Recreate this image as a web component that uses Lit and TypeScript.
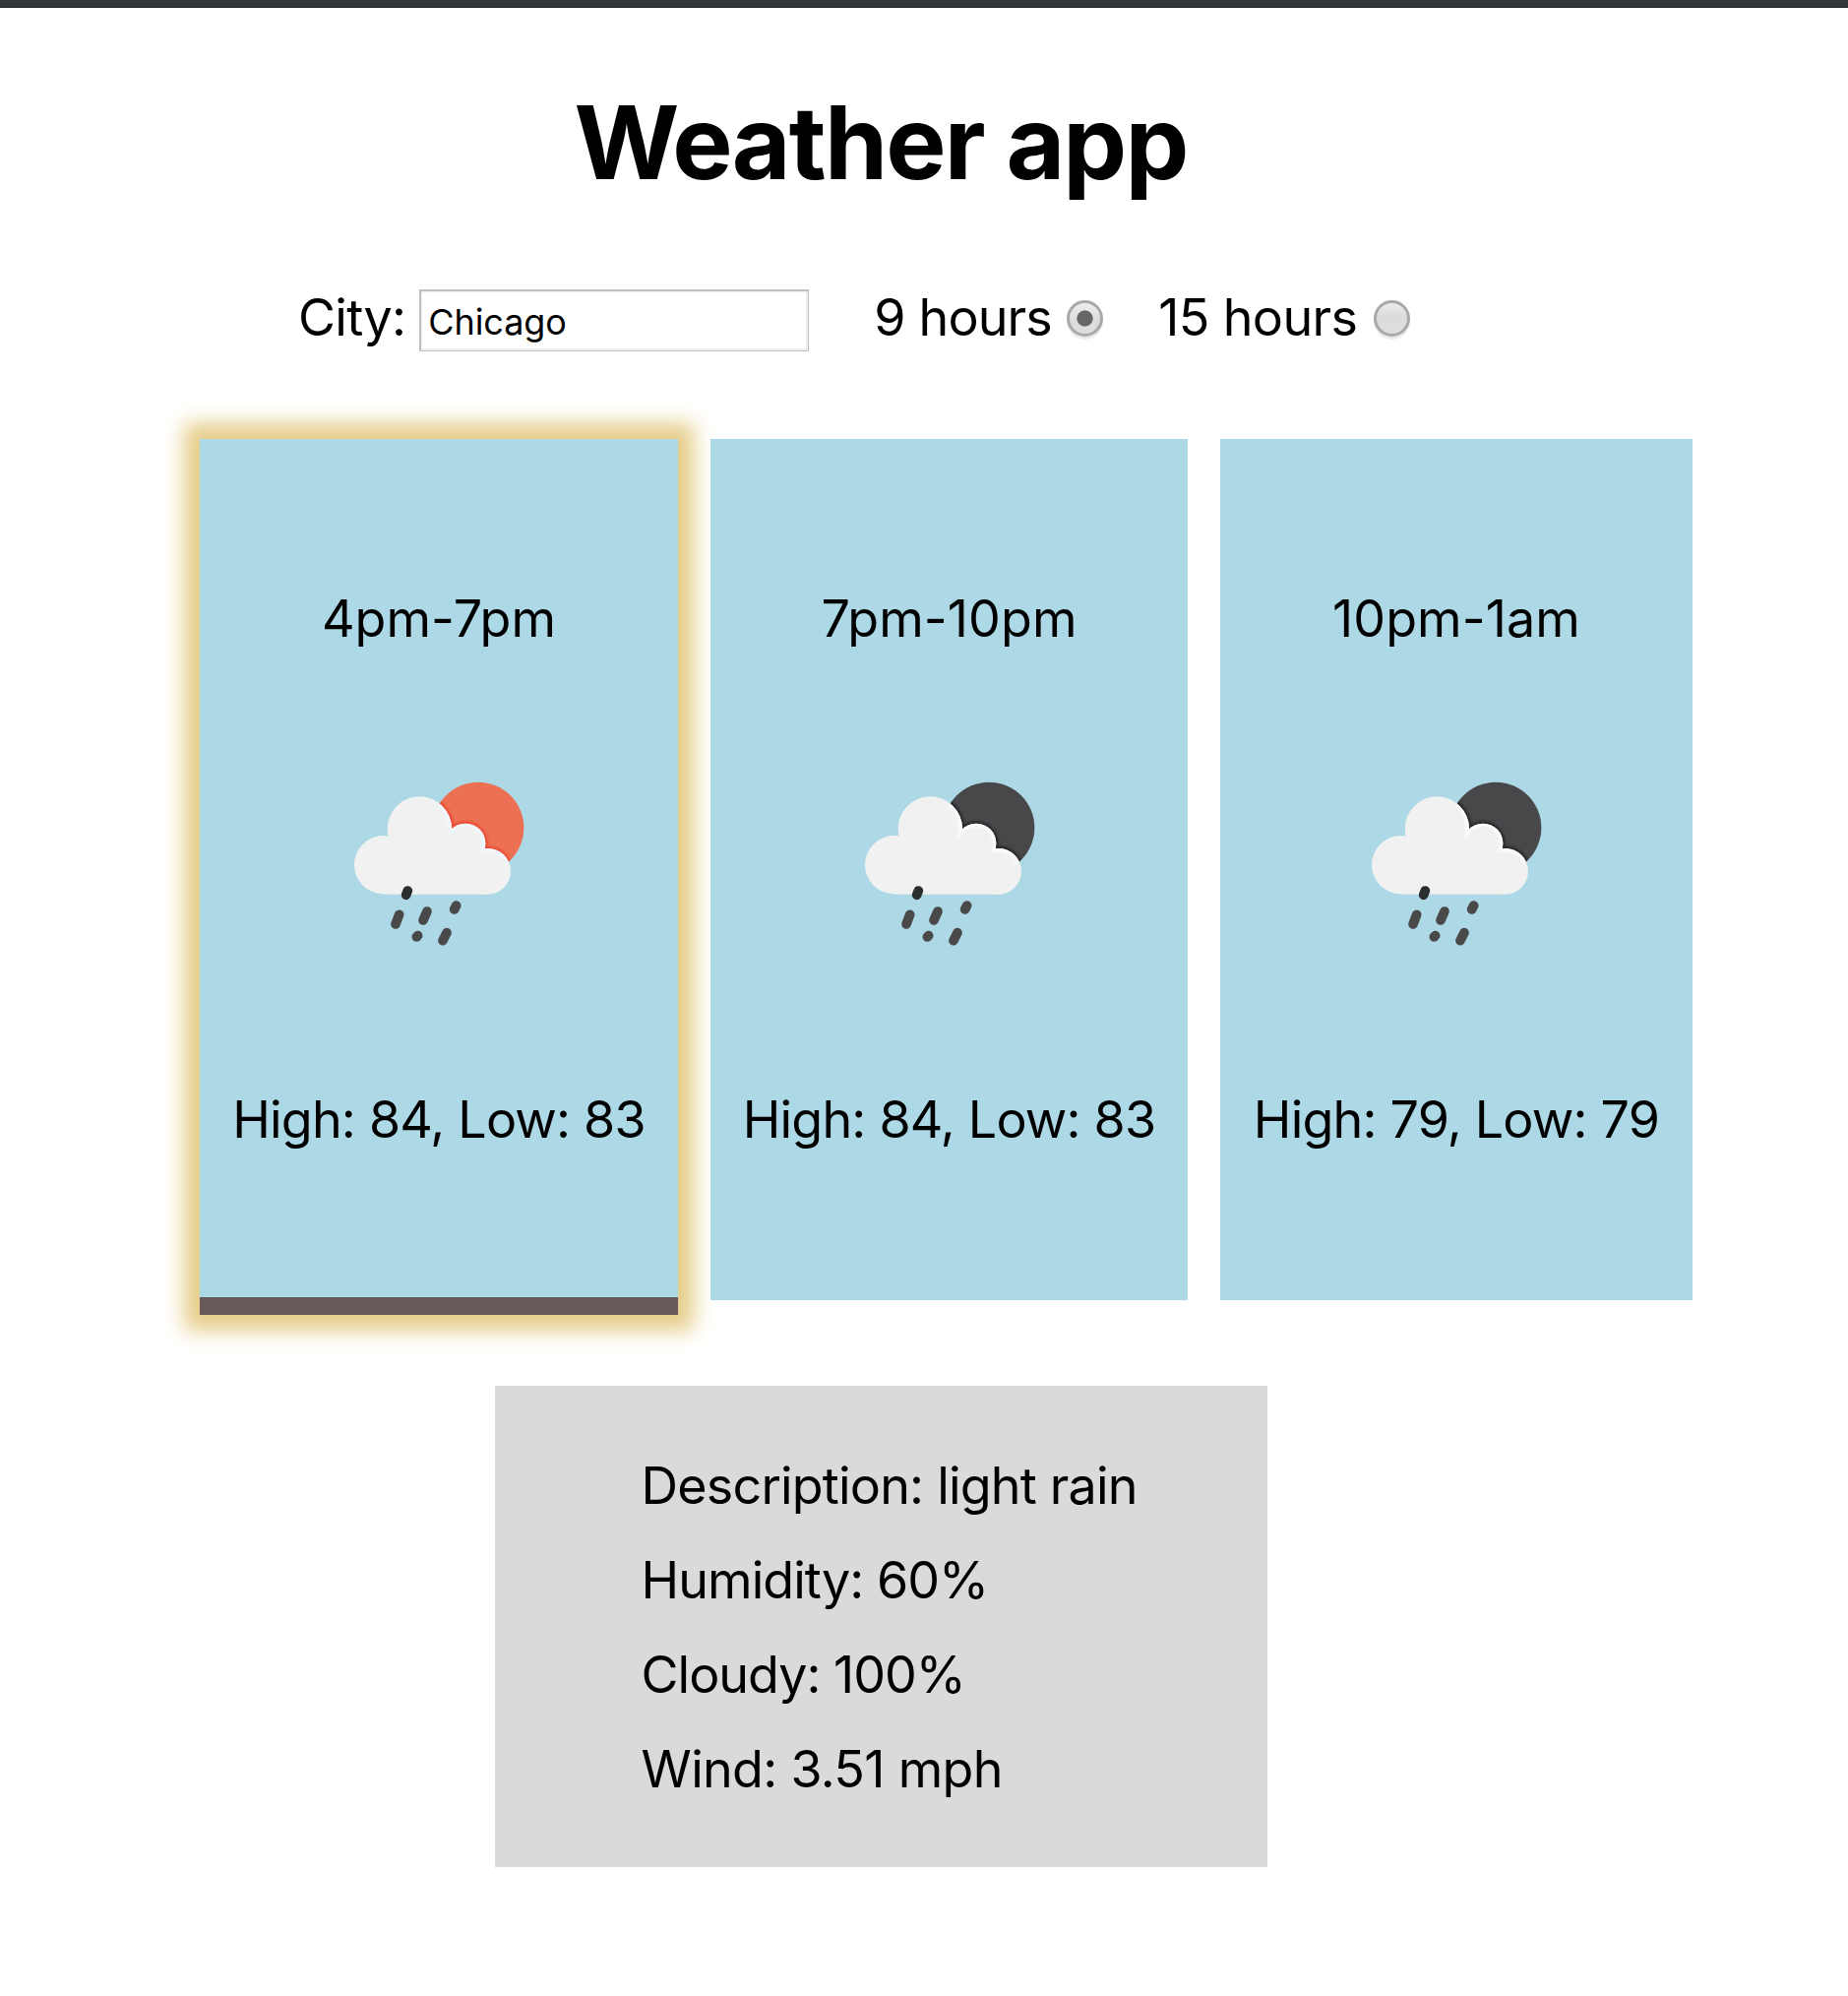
import { LitElement, html, svg, css } from "lit";
import { customElement, property, state } from "lit/decorators.js";
import { classMap } from "lit/directives/class-map.js";

interface Forecast {
  id: string;
  time: string;
  high: number;
  low: number;
  night: boolean;
}

const forecasts: Forecast[] = [
  { id: "first", time: "4pm-7pm", high: 84, low: 83, night: false },
  { id: "second", time: "7pm-10pm", high: 84, low: 83, night: true },
  { id: "third", time: "10pm-1am", high: 79, low: 79, night: true },
];

@customElement("weather-icon")
export class WeatherIcon extends LitElement {
  @property({ type: Boolean }) night = false;

  static styles = css`
    :host { display: block; width: 220px; height: 210px; }
    svg { display: block; width: 220px; height: 210px; }
    .disc { fill: #ec7053; }
    .edge { fill: #ea4f38; }
    .rim { fill: #f1f8fe; }
    .night .disc { fill: #48484a; }
    .night .edge { fill: #2b2b2d; }
    .night .rim { fill: #fdfdfd; }
    .cloud { fill: #f1f1f1; }
    .drop { stroke: #48484a; stroke-width: 29; stroke-linecap: round; }
    .wet { stroke: #2c2d2f; }
    .halo { stroke: #fcfcfc; stroke-width: 42; stroke-linecap: round; }
  `;

  // The cloud outline, grown or shrunk by d units.
  private cloud(d: number) {
    return svg`
      <circle cx="148" cy="326" r=${89 + d}></circle>
      <circle cx="258" cy="216" r=${98 + d}></circle>
      <circle cx="398" cy="261" r=${61 + d}></circle>
      <circle cx="466" cy="346" r=${70 + d}></circle>
      <path d="M148 300 L258 216 L398 261 L466 346 V${416 + d} H148 Z"></path>`;
  }

  render() {
    return html`<svg viewBox="-13 0 660 630" class=${this.night ? "night" : "day"}>
      <defs>
        <clipPath id="sun"><circle cx="437" cy="213" r="139"></circle></clipPath>
        <clipPath id="body"><path d="M100 340H330V415H100Z"></path></clipPath>
        <filter id="soft" x="-10%" y="-10%" width="120%" height="120%"><feGaussianBlur stdDeviation="2.5"></feGaussianBlur></filter>
        <filter id="drops" x="-10%" y="-10%" width="120%" height="120%"><feGaussianBlur stdDeviation="2.2"></feGaussianBlur></filter>
      </defs>
      <circle class="disc" cx="437" cy="213" r="139"></circle>
      <g clip-path="url(#sun)"><g class="edge" filter="url(#soft)">${this.cloud(8)}</g></g>
      <g class="cloud">${this.cloud(0)}</g>
      <g clip-path="url(#sun)">
        <g class="rim">${this.cloud(0)}</g>
        <g class="cloud" filter="url(#soft)">${this.cloud(-9)}</g>
      </g>
      <g clip-path="url(#body)"><path class="halo" filter="url(#soft)" d="M224 403L215 420"></path></g>
      <g filter="url(#drops)">
        <path class="drop wet" d="M222 405L217 418"></path>
        <path class="drop" d="M196 478L185 507"></path>
        <path class="drop" d="M281 468L269 495"></path>
        <path class="drop" d="M370 450L364 462"></path>
        <path class="drop" d="M253 542L249 546"></path>
        <path class="drop" d="M341 533L329 557"></path>
      </g>
    </svg>`;
  }
}

@customElement("app-root")
export class AppRoot extends LitElement {
  @state() private hours = 9;
  @state() private selected = "first";

  static styles = css`
    :host {
      display: block;
      height: 2028px;
      overflow: hidden;
      background: #fff;
      color: #000;
      font: 52px/64px Inter, "Liberation Sans", sans-serif;
    }
    * { box-sizing: border-box; }
    .chrome { height: 8px; background: #33373a; border-bottom: 1px solid #24282b; }
    .title {
      width: 1790px;
      margin: 75px 0 0;
      text-align: center;
      font-size: 103px;
      line-height: 124px;
      font-weight: 700;
      letter-spacing: -1.84px;
    }
    .controls { display: flex; align-items: flex-start; height: 64px; margin: 84px 0 0 303px; }
    .controls label { white-space: nowrap; }
    .city-label { letter-spacing: -0.7px; }
    .city {
      width: 396px;
      height: 63px;
      margin: 3px 66px 0 14px;
      padding: 4px 0 2px 7px;
      border: 2px solid #c0c0c0;
      border-right-width: 1px;
      border-bottom-width: 1px;
      border-radius: 0;
      outline: none;
      background: #fff;
      box-shadow: inset 0 0 0 1px #efefef, inset -1px -1px 0 1px #efefef;
      color: #000;
      font: 36px/50px Inter, sans-serif;
      letter-spacing: -0.1px;
    }
    .nine { letter-spacing: -0.85px; }
    .fifteen { letter-spacing: -0.65px; }
    .radio {
      appearance: none;
      flex: none;
      width: 37px;
      height: 37px;
      margin: 14px 56px 0 15.4px;
      border: 3.5px solid #a9a9a9;
      border-radius: 50%;
      background: linear-gradient(#ececec, #dcdcdc 40%, #dedede);
      box-shadow: 0 3px 1px #ebebeb;
    }
    .fifteen + .radio { margin-left: 17px; }
    .radio:checked {
      background: radial-gradient(circle, #666 7.7px, transparent 8.5px), linear-gradient(#ececec, #dcdcdc 60%, #dedede);
    }
    .cards { display: flex; align-items: flex-start; gap: 33px; height: 890px; margin: 91px 0 0 203px; }
    .card {
      display: flex;
      flex-direction: column;
      align-items: center;
      width: 486px;
      height: 875px;
      padding-top: 151px;
      background: #add8e5;
      white-space: nowrap;
    }
    .second { width: 485px; }
    .third { width: 480px; }
    .active {
      height: 890px;
      border-bottom: 18px solid #685959;
      box-shadow: 0 0 20px 16px #e5cd88;
    }
    .second .time, .third .time { letter-spacing: 0.1px; }
    .icon { margin-top: 109px; }
    .temps { margin-top: 126px; letter-spacing: -0.8px; }
    .details {
      width: 785px;
      height: 489px;
      margin: 72px 0 0 503px;
      padding: 54px 0 0 148.6px;
      background: #dadada;
      line-height: 96px;
      white-space: nowrap;
    }
    .description { letter-spacing: -0.8px; }
    .humidity { letter-spacing: -0.95px; }
    .cloudy { letter-spacing: -1px; }
    .wind { letter-spacing: -0.68px; }
  `;

  render() {
    return html`
      <div class="chrome"></div>
      <h1 class="title">Weather app</h1>
      <div class="controls">
        <label class="city-label" for="city">City:</label>
        <input class="city" id="city" type="text" value="Chicago" spellcheck="false" />
        <label class="nine" for="nine">9 hours</label>
        <input class="radio" id="nine" type="radio" name="hours" .checked=${this.hours === 9} @change=${() => (this.hours = 9)} />
        <label class="fifteen" for="fifteen">15 hours</label>
        <input class="radio" id="fifteen" type="radio" name="hours" .checked=${this.hours === 15} @change=${() => (this.hours = 15)} />
      </div>
      <div class="cards">
        ${forecasts.map(
          (f) => html`
            <div
              class=${classMap({ card: true, [f.id]: true, active: f.id === this.selected })}
              @click=${() => (this.selected = f.id)}
            >
              <div class="time">${f.time}</div>
              <weather-icon class="icon" ?night=${f.night}></weather-icon>
              <div class="temps">High: ${f.high}, Low: ${f.low}</div>
            </div>
          `
        )}
      </div>
      <div class="details">
        <div class="description">Description: light rain</div>
        <div class="humidity">Humidity: 60%</div>
        <div class="cloudy">Cloudy: 100%</div>
        <div class="wind">Wind: 3.51 mph</div>
      </div>
    `;
  }
}
